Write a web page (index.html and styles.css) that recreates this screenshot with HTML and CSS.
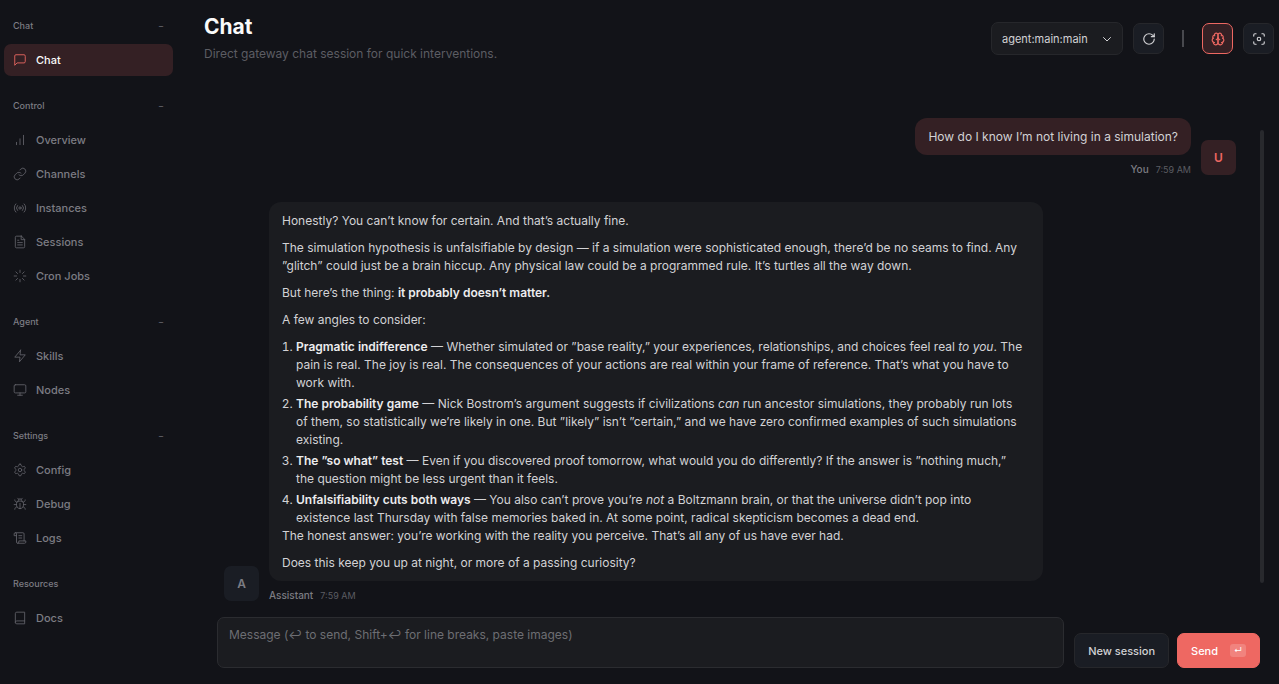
FILE: index.html
```html
<!DOCTYPE html>
<html lang="en">
<head>
<meta charset="utf-8">
<title>Chat</title>
<meta name="viewport" content="width=device-width, initial-scale=1">
<link rel="stylesheet" href="styles.css">
</head>
<body>
<svg class="sprite" aria-hidden="true">
  <symbol id="i-chat" viewBox="0 0 24 24"><path d="M21 15a2 2 0 0 1-2 2H7l-4 4V5a2 2 0 0 1 2-2h14a2 2 0 0 1 2 2z"/></symbol>
  <symbol id="i-bars" viewBox="0 0 24 24"><path d="M12 20V10M18 20V4M6 20v-4"/></symbol>
  <symbol id="i-link" viewBox="0 0 24 24"><path d="M10 13a5 5 0 0 0 7.54.54l3-3a5 5 0 0 0-7.07-7.07l-1.72 1.71"/><path d="M14 11a5 5 0 0 0-7.54-.54l-3 3a5 5 0 0 0 7.07 7.07l1.71-1.71"/></symbol>
  <symbol id="i-radio" viewBox="0 0 24 24"><circle cx="12" cy="12" r="2"/><path d="M16.24 7.76a6 6 0 0 1 0 8.49M7.76 16.24a6 6 0 0 1 0-8.49M19.07 4.93a10 10 0 0 1 0 14.14M4.93 19.07a10 10 0 0 1 0-14.14"/></symbol>
  <symbol id="i-file" viewBox="0 0 24 24"><path d="M14.5 2H6a2 2 0 0 0-2 2v16a2 2 0 0 0 2 2h12a2 2 0 0 0 2-2V7.5L14.5 2z"/><path d="M14 2v6h6M16 13H8M16 17H8M10 9H8"/></symbol>
  <symbol id="i-loader" viewBox="0 0 24 24"><path d="M12 2v4M12 18v4M4.93 4.93l2.83 2.83M16.24 16.24l2.83 2.83M2 12h4M18 12h4M4.93 19.07l2.83-2.83M16.24 7.76l2.83-2.83"/></symbol>
  <symbol id="i-zap" viewBox="0 0 24 24"><path d="M13 2 3 14h9l-1 8 10-12h-9l1-8z"/></symbol>
  <symbol id="i-monitor" viewBox="0 0 24 24"><rect x="2" y="3" width="20" height="14" rx="2"/><path d="M8 21h8M12 17v4"/></symbol>
  <symbol id="i-gear" viewBox="0 0 24 24"><path d="M12.22 2h-.44a2 2 0 0 0-2 2v.18a2 2 0 0 1-1 1.73l-.43.25a2 2 0 0 1-2 0l-.15-.08a2 2 0 0 0-2.73.73l-.22.38a2 2 0 0 0 .73 2.73l.15.1a2 2 0 0 1 1 1.72v.51a2 2 0 0 1-1 1.74l-.15.09a2 2 0 0 0-.73 2.73l.22.38a2 2 0 0 0 2.73.73l.15-.08a2 2 0 0 1 2 0l.43.25a2 2 0 0 1 1 1.73V20a2 2 0 0 0 2 2h.44a2 2 0 0 0 2-2v-.18a2 2 0 0 1 1-1.73l.43-.25a2 2 0 0 1 2 0l.15.08a2 2 0 0 0 2.73-.73l.22-.39a2 2 0 0 0-.73-2.73l-.15-.08a2 2 0 0 1-1-1.74v-.5a2 2 0 0 1 1-1.74l.15-.09a2 2 0 0 0 .73-2.73l-.22-.38a2 2 0 0 0-2.73-.73l-.15.08a2 2 0 0 1-2 0l-.43-.25a2 2 0 0 1-1-1.73V4a2 2 0 0 0-2-2z"/><circle cx="12" cy="12" r="3"/></symbol>
  <symbol id="i-bug" viewBox="0 0 24 24"><path d="m8 2 1.88 1.88M14.12 3.88 16 2M9 7.13v-1a3 3 0 1 1 6 0v1M12 20c-3.3 0-6-2.7-6-6v-3a4 4 0 0 1 4-4h4a4 4 0 0 1 4 4v3c0 3.3-2.7 6-6 6M12 20v-9M6.53 9C4.6 8.8 3 7.1 3 5M6 13H2M3 21c0-2.1 1.7-3.9 3.8-4M20.97 5c0 2.1-1.6 3.8-3.5 4M22 13h-4M17.2 17c2.1.1 3.8 1.9 3.8 4"/></symbol>
  <symbol id="i-scroll" viewBox="0 0 24 24"><path d="M8 21h12a2 2 0 0 0 2-2v-2H10v2a2 2 0 1 1-4 0V5a2 2 0 1 0-4 0v3h4"/><path d="M19 17V5a2 2 0 0 0-2-2H4M15 8h-5M15 12h-5"/></symbol>
  <symbol id="i-book" viewBox="0 0 24 24"><path d="M4 19.5v-15A2.5 2.5 0 0 1 6.5 2H20v20H6.5a2.5 2.5 0 0 1 0-5H20"/></symbol>
  <symbol id="i-refresh" viewBox="0 0 24 24"><path d="M21 12a9 9 0 1 1-9-9c2.52 0 4.93 1 6.74 2.74L21 8"/><path d="M21 3v5h-5"/></symbol>
  <symbol id="i-brain" viewBox="0 0 24 24"><path d="M12 5a3 3 0 1 0-5.997.125 4 4 0 0 0-2.526 5.77 4 4 0 0 0 .556 6.588A4 4 0 1 0 12 18Z"/><path d="M12 5a3 3 0 1 1 5.997.125 4 4 0 0 1 2.526 5.77 4 4 0 0 1-.556 6.588A4 4 0 1 1 12 18Z"/><path d="M15 13a4.5 4.5 0 0 1-3-4 4.5 4.5 0 0 1-3 4M17.599 6.5a3 3 0 0 0 .399-1.375M6.003 5.125A3 3 0 0 0 6.401 6.5M3.477 10.896a4 4 0 0 1 .585-.396M19.938 10.5a4 4 0 0 1 .585.396M6 18a4 4 0 0 1-1.967-.516M19.967 17.484A4 4 0 0 1 18 18"/></symbol>
  <symbol id="i-focus" viewBox="0 0 24 24"><path d="M3 7V5a2 2 0 0 1 2-2h2M17 3h2a2 2 0 0 1 2 2v2M21 17v2a2 2 0 0 1-2 2h-2M7 21H5a2 2 0 0 1-2-2v-2"/><circle cx="12" cy="12" r="3"/></symbol>
  <symbol id="i-down" viewBox="0 0 24 24"><path d="m5 9 7 7 7-7"/></symbol>
</svg>
<div class="shell">
  <nav class="nav" aria-label="Main">
    <section class="nav-group">
      <button class="nav-label" type="button"><span>Chat</span><span class="nav-fold">−</span></button>
      <a class="nav-item active" href="#chat"><svg class="icon"><use href="#i-chat"/></svg>Chat</a>
    </section>
    <section class="nav-group">
      <button class="nav-label" type="button"><span>Control</span><span class="nav-fold">−</span></button>
      <a class="nav-item" href="#overview"><svg class="icon"><use href="#i-bars"/></svg>Overview</a>
      <a class="nav-item" href="#channels"><svg class="icon"><use href="#i-link"/></svg>Channels</a>
      <a class="nav-item" href="#instances"><svg class="icon"><use href="#i-radio"/></svg>Instances</a>
      <a class="nav-item" href="#sessions"><svg class="icon"><use href="#i-file"/></svg>Sessions</a>
      <a class="nav-item" href="#cron"><svg class="icon"><use href="#i-loader"/></svg>Cron Jobs</a>
    </section>
    <section class="nav-group">
      <button class="nav-label" type="button"><span>Agent</span><span class="nav-fold">−</span></button>
      <a class="nav-item" href="#skills"><svg class="icon"><use href="#i-zap"/></svg>Skills</a>
      <a class="nav-item" href="#nodes"><svg class="icon"><use href="#i-monitor"/></svg>Nodes</a>
    </section>
    <section class="nav-group">
      <button class="nav-label" type="button"><span>Settings</span><span class="nav-fold">−</span></button>
      <a class="nav-item" href="#config"><svg class="icon"><use href="#i-gear"/></svg>Config</a>
      <a class="nav-item" href="#debug"><svg class="icon"><use href="#i-bug"/></svg>Debug</a>
      <a class="nav-item" href="#logs"><svg class="icon"><use href="#i-scroll"/></svg>Logs</a>
    </section>
    <section class="nav-group">
      <div class="nav-label"><span>Resources</span></div>
      <a class="nav-item" href="#docs"><svg class="icon"><use href="#i-book"/></svg>Docs</a>
    </section>
  </nav>

  <main class="content">
    <header class="page-head">
      <div class="page-titles">
        <h1 class="page-title">Chat</h1>
        <p class="page-sub">Direct gateway chat session for quick interventions.</p>
      </div>
      <div class="controls">
        <div class="session-select">
          <select class="session-input" aria-label="Session"><option>agent:main:main</option></select>
          <svg class="icon session-arrow"><use href="#i-down"/></svg>
        </div>
        <button class="icon-btn" type="button" aria-label="Refresh"><svg class="icon"><use href="#i-refresh"/></svg></button>
        <span class="divider"></span>
        <button class="icon-btn on" type="button" aria-label="Toggle thinking"><svg class="icon"><use href="#i-brain"/></svg></button>
        <button class="icon-btn" type="button" aria-label="Focus mode"><svg class="icon"><use href="#i-focus"/></svg></button>
      </div>
    </header>

    <div class="thread-wrap">
      <div class="thread">
        <article class="msg user">
          <div class="msg-body">
            <div class="bubble">How do I know I’m not living in a simulation?</div>
            <div class="meta"><span class="who">You</span><time>7:59 AM</time></div>
          </div>
          <div class="avatar">U</div>
        </article>
        <article class="msg">
          <div class="avatar">A</div>
          <div class="msg-body">
            <div class="bubble">
              <p>Honestly? You can’t know for certain. And that’s actually fine.</p>
              <p>The simulation hypothesis is unfalsifiable by design — if a simulation were sophisticated enough, there’d be no seams to find. Any ”glitch” could just be a brain hiccup. Any physical law could be a programmed rule. It’s turtles all the way down.</p>
              <p>But here’s the thing: <strong>it probably doesn’t matter.</strong></p>
              <p>A few angles to consider:</p>
              <ol>
                <li><strong>Pragmatic indifference</strong> — Whether simulated or ”base reality,” your experiences, relationships, and choices feel real <em>to you</em>. The pain is real. The joy is real. The consequences of your actions are real within your frame of reference. That’s what you have to work with.</li>
                <li><strong>The probability game</strong> — Nick Bostrom’s argument suggests if civilizations <em>can</em> run ancestor simulations, they probably run lots of them, so statistically we’re likely in one. But ”likely” isn’t ”certain,” and we have zero confirmed examples of such simulations existing.</li>
                <li><strong>The ”so what” test</strong> — Even if you discovered proof tomorrow, what would you do differently? If the answer is ”nothing much,” the question might be less urgent than it feels.</li>
                <li><strong>Unfalsifiability cuts both ways</strong> — You also can’t prove you’re <em>not</em> a Boltzmann brain, or that the universe didn’t pop into existence last Thursday with false memories baked in. At some point, radical skepticism becomes a dead end.</li>
              </ol>
              <p>The honest answer: you’re working with the reality you perceive. That’s all any of us have ever had.</p>
              <p>Does this keep you up at night, or more of a passing curiosity?</p>
            </div>
            <div class="meta"><span class="who">Assistant</span><time>7:59 AM</time></div>
          </div>
        </article>
      </div>
      <div class="scroll-thumb"></div>
    </div>

    <form class="composer">
      <textarea class="message" aria-label="Message" placeholder="Message (↩ to send, Shift+↩ for line breaks, paste images)"></textarea>
      <button class="btn" type="button">New session</button>
      <button class="btn primary" type="submit">Send<kbd class="key">↵</kbd></button>
    </form>
  </main>
</div>
</body>
</html>
```
FILE: styles.css
```css
* { box-sizing: border-box; }

:root {
  --bg: #121318;
  --card: #1b1c20;
  --raised: #1a1d24;
  --line: #26272b;
  --text: #d2d2d5;
  --strong: #fafafa;
  --muted: #7c7c83;
  --dim: #5c5d63;
  --accent: #ee6862;
  --accent-soft: #342024;
}

body {
  margin: 0;
  background: var(--bg);
  color: var(--text);
  font-family: Inter, "Liberation Sans", sans-serif;
  font-size: 12px;
  line-height: 18px;
}

button, select, textarea, kbd { font: inherit; color: inherit; }

.sprite { display: none; }

.icon {
  flex: none;
  width: 14px;
  height: 14px;
  fill: none;
  stroke: currentColor;
  stroke-width: 2;
  stroke-linecap: round;
  stroke-linejoin: round;
}

.shell {
  display: grid;
  grid-template-columns: 177px minmax(0, 1fr);
  min-height: 100vh;
}

/* Sidebar */
.nav {
  display: flex;
  flex-direction: column;
  gap: 19px;
  padding: 15px 4px;
}

.nav-group { display: flex; flex-direction: column; gap: 2px; }

.nav-label {
  display: flex;
  align-items: center;
  justify-content: space-between;
  height: 22px;
  margin-bottom: 5px;
  padding: 0 9px;
  border: 0;
  background: none;
  color: var(--muted);
  font-size: 9px;
  font-weight: 500;
}

.nav-fold { color: var(--dim); }

.nav-item {
  display: flex;
  align-items: center;
  gap: 9px;
  height: 32px;
  padding: 0 9px;
  border-radius: 7px;
  color: var(--muted);
  font-size: 11px;
  font-weight: 500;
  text-decoration: none;
}

.nav-item .icon { stroke-width: 1.5; opacity: .75; }
.nav-item.active { background: var(--accent-soft); color: var(--strong); }
.nav-item.active .icon { color: var(--accent); opacity: 1; }

/* Page */
.content {
  display: flex;
  flex-direction: column;
  min-width: 0;
}

.page-head {
  display: flex;
  justify-content: space-between;
  align-items: flex-start;
  padding: 13px 5px 0 27px;
}

.page-title {
  margin: 0;
  color: var(--strong);
  font-size: 21px;
  line-height: 28px;
  font-weight: 700;
}

.page-sub { margin: 4px 0 0; color: var(--dim); }

.controls {
  display: flex;
  align-items: center;
  gap: 10px;
  padding-top: 9px;
}

.session-select { position: relative; }

.session-input {
  appearance: none;
  width: 132px;
  height: 33px;
  padding: 0 28px 0 10px;
  border: 1px solid var(--line);
  border-radius: 7px;
  background: var(--card);
  font-size: 11px;
}

.session-arrow {
  position: absolute;
  right: 10px;
  top: 11px;
  width: 12px;
  height: 12px;
  pointer-events: none;
}

.icon-btn {
  display: grid;
  place-items: center;
  width: 31px;
  height: 31px;
  padding: 0;
  border: 1px solid var(--line);
  border-radius: 7px;
  background: var(--raised);
}

.icon-btn.on {
  border-color: var(--accent);
  background: var(--accent-soft);
  color: var(--accent);
}

.divider {
  width: 2px;
  height: 17px;
  margin: 0 8px;
  background: #48494e;
}

/* Conversation */
.thread-wrap {
  display: flex;
  flex: 1;
  padding: 55px 15px 0 47px;
}

.thread {
  display: flex;
  flex: 1;
  flex-direction: column;
  gap: 23px;
  min-width: 0;
}

.scroll-thumb {
  width: 4px;
  margin: 12px 0 24px 24px;
  border-radius: 2px;
  background: #28292d;
}

.msg { display: flex; align-items: flex-end; gap: 10px; }
.msg.user { justify-content: flex-end; }
.msg-body { max-width: 76.5%; }
.msg.user .meta { justify-content: flex-end; }

.avatar {
  display: grid;
  place-items: center;
  flex: none;
  width: 35px;
  height: 35px;
  margin-bottom: 4px;
  border-radius: 7px;
  background: var(--raised);
  color: var(--muted);
  font-weight: 600;
}

.user .avatar { background: var(--accent-soft); color: var(--accent); }

.bubble {
  padding: 10px 16px 9px 13px;
  border-radius: 12px;
  background: var(--card);
}

.user .bubble { padding-right: 13px; background: var(--accent-soft); }

.bubble p { margin: 0 0 9px; }
.bubble p:last-child { margin: 0; }
.bubble ol { margin: 0; padding-left: 14px; }
.bubble li + li { margin-top: 3px; }
.bubble strong { color: #ececee; font-weight: 600; }

.meta {
  display: flex;
  align-items: center;
  gap: 7px;
  margin-top: 5px;
  color: var(--dim);
  font-size: 9px;
  line-height: 19px;
}

.who { color: var(--muted); font-size: 10px; font-weight: 500; }

/* Composer */
.composer {
  display: flex;
  align-items: flex-end;
  gap: 8px;
  padding: 10px 19px 16px 40px;
}

.message {
  flex: 1;
  height: 51px;
  margin-right: 2px;
  padding: 8px 11px;
  border: 1px solid #2b2c30;
  border-radius: 7px;
  background: var(--card);
  resize: none;
}

.message::placeholder { color: #6d6e73; }

.btn {
  display: flex;
  align-items: center;
  gap: 12px;
  height: 35px;
  padding: 0 13px;
  border: 1px solid var(--line);
  border-radius: 7px;
  background: var(--raised);
  font-size: 11px;
  font-weight: 500;
}

.btn.primary {
  border-color: var(--accent);
  background: var(--accent);
  color: #fff;
}

.key {
  padding: 0 4px;
  border-radius: 3px;
  background: rgba(255, 255, 255, .18);
  font-size: 8px;
  line-height: 13px;
}
```
